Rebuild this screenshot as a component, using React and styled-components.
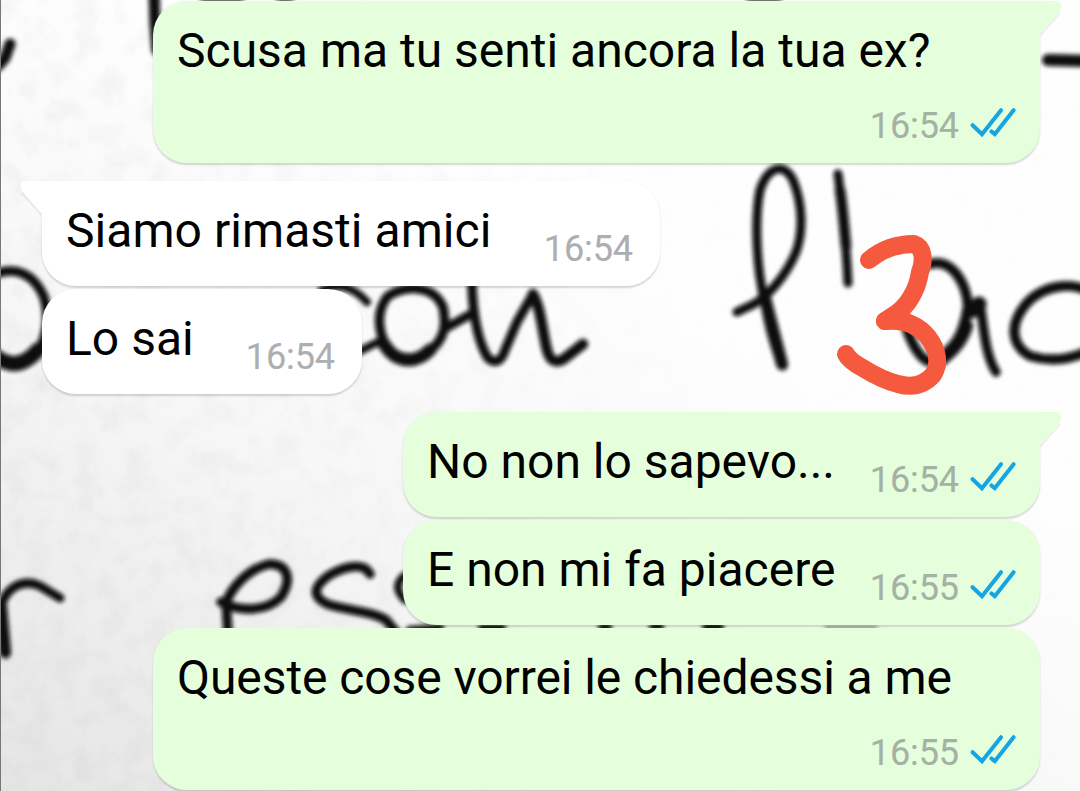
import styled, { createGlobalStyle, css } from "styled-components";

const GlobalStyle = createGlobalStyle`
  body {
    margin: 0;
    overflow: hidden;
    background: #f6f6f6;
  }
`;

const StyledChat = styled.main`
  position: relative;
  box-sizing: border-box;
  width: 1080px;
  height: 791px;
  overflow: hidden;
  font-family: Roboto, "Liberation Sans", sans-serif;
`;

const StyledWallpaper = styled.svg`
  position: absolute;
  inset: 0;
`;

const StyledMessages = styled.div`
  position: relative;
  display: flex;
  flex-direction: column;
  padding: 1px 40px 0 42px;
`;

const sentTail = css`
  right: -21px;
`;

const receivedTail = css`
  left: -21px;
  transform: scaleX(-1);
`;

const StyledBubble = styled.div`
  position: relative;
  display: flex;
  justify-content: space-between;
  box-sizing: border-box;
  flex-shrink: 0;
  width: ${(props) => props.$width}px;
  height: ${(props) => (props.$tall ? 162 : 105)}px;
  margin-bottom: ${(props) => (props.$last ? 18 : 3)}px;
  padding: 22px 24px 16px 24px;
  align-self: ${(props) => (props.$sent ? "flex-end" : "flex-start")};
  background: ${(props) => (props.$sent ? "#e5ffdc" : "#ffffff")};
  border-radius: 34px;
  ${(props) => props.$tail && (props.$sent ? "border-top-right-radius: 0;" : "border-top-left-radius: 0;")}
  box-shadow: 0 1.5px 2px rgba(0, 0, 0, 0.16);
`;

const StyledTail = styled.svg`
  position: absolute;
  top: 0;
  overflow: visible;
  ${(props) => (props.$sent ? sentTail : receivedTail)}
`;

const StyledText = styled.p`
  margin: 0;
  font-size: 48px;
  line-height: 56px;
  letter-spacing: ${(props) => props.$tracking || 0}px;
  white-space: nowrap;
  color: #000;
`;

/* on tall bubbles the time sits under the text, so it takes no width */
const StyledMeta = styled.div`
  display: flex;
  align-self: flex-end;
  justify-content: flex-end;
  width: ${(props) => (props.$tall ? 0 : "auto")};
  margin-right: ${(props) => (props.$sent ? 0 : 3)}px;
`;

const StyledTime = styled.span`
  font-size: 36px;
  line-height: 42px;
  letter-spacing: -0.1px;
  color: ${(props) => (props.$sent ? "#a5b1a5" : "#abafb2")};
  -webkit-text-stroke: 0.15px currentColor;
`;

const StyledTicks = styled.svg`
  flex-shrink: 0;
  margin: 0 0 0 11px;
`;

const Ticks = () => (
  <StyledTicks width="46" height="34" viewBox="970 105 46 34" fill="none" stroke="#14a5e2" strokeWidth="4" strokeLinecap="round">
    <path d="M972.6 125.2 982 134.2 1001 110.2" />
    <path d="M991.4 131.4 994.8 134.2 1013.6 110.2" />
  </StyledTicks>
);

const messages = [
  { text: "Scusa ma tu senti ancora la tua ex?", time: "16:54", width: 887, sent: true, tall: true, tail: true, last: true },
  { text: "Siamo rimasti amici", time: "16:54", width: 618, tail: true, tracking: 0.05 },
  { text: "Lo sai", time: "16:54", width: 320, last: true },
  { text: "No non lo sapevo...", time: "16:54", width: 637, sent: true, tail: true },
  { text: "E non mi fa piacere", time: "16:55", width: 637, sent: true },
  { text: "Queste cose vorrei le chiedessi a me", time: "16:55", width: 887, sent: true, tall: true, tracking: -0.08 },
];

const Message = ({ text, time, width, sent, tall, tail, last, tracking }) => (
  <StyledBubble $width={width} $sent={sent} $tall={tall} $tail={tail} $last={last}>
    {tail && (
      <StyledTail $sent={sent} width="22" height="34" viewBox="0 0 22 34">
        <path d="M1.5 34 21 12" stroke="#000" strokeOpacity="0.06" strokeWidth="2.4" />
        <path d="M0 0H17.5C22 0 23.5 5 20.5 10.5L1 33V34H0Z" fill={sent ? "#e5ffdc" : "#ffffff"} />
      </StyledTail>
    )}
    <StyledText $tracking={tracking}>{text}</StyledText>
    <StyledMeta $sent={sent} $tall={tall}>
      <StyledTime $sent={sent}>{time}</StyledTime>
      {sent && <Ticks />}
    </StyledMeta>
  </StyledBubble>
);

const Wallpaper = () => (
  <StyledWallpaper width="1080" height="791" viewBox="0 0 1080 791" fill="none">
    <defs>
      <linearGradient id="paper" gradientUnits="userSpaceOnUse" x1="420" y1="150" x2="60" y2="791">
        <stop offset="0" stopColor="#fefefe" />
        <stop offset="0.45" stopColor="#f7f7f7" />
        <stop offset="1" stopColor="#e6e6e6" />
      </linearGradient>
      <linearGradient id="fade" x1="0" y1="0" x2="1" y2="0">
        <stop offset="0" stopColor="#fff" />
        <stop offset="0.4" stopColor="#fff" stopOpacity="0.6" />
        <stop offset="0.65" stopColor="#fff" stopOpacity="0.1" />
      </linearGradient>
      <mask id="left">
        <rect width="1080" height="791" fill="url(#fade)" />
      </mask>
      <filter id="grain" x="0" y="0" width="100%" height="100%">
        <feTurbulence type="fractalNoise" baseFrequency="0.04" numOctaves="3" seed="4" />
        <feColorMatrix values="0 0 0 0 0.4  0 0 0 0 0.4  0 0 0 0 0.4  0.25 0 0 0 -0.105" />
      </filter>
      <filter id="ink" filterUnits="userSpaceOnUse" x="-20" y="-20" width="1120" height="830">
        <feGaussianBlur stdDeviation="2.1" />
      </filter>
    </defs>
    <rect width="1080" height="791" fill="url(#paper)" />
    <g mask="url(#left)">
      <rect width="1080" height="791" filter="url(#grain)" />
    </g>
    <g stroke="#080808" strokeWidth="9.5" strokeLinecap="round" strokeLinejoin="round" filter="url(#ink)">
      <path d="M-2 66 5 58 10 44" strokeWidth="11" />
      <path d="M154-8 155 24 157 50" strokeWidth="11" />
      <path d="M204-4H240M280-4H290M750-4H778" />
      <path d="M1048 60 1090 61" strokeWidth="12" />
      {/* first line */}
      <path d="M-5 274C16 266 34 274 44 297 52 324 44 352 26 362" />
      <path d="M-5 356C8 366 22 368 38 350" strokeWidth="15" />
      <path d="M322 290C340 282 354 288 367 302M358 352 380 341" strokeWidth="8" />
      <path d="M388 296C408 284 434 286 443 307 447 326 444 338 432 349 416 366 396 362 386 346 376 326 378 308 388 296" />
      <path d="M384 344C396 364 416 364 430 350" strokeWidth="13" />
      <path d="M446 328 471 314" strokeWidth="9" />
      <path d="M472 286C473 320 480 346 488 358 496 365 502 360 505 350L517 322 533 294" />
      <path d="M533 294C541 308 542 330 547 350 550 362 557 364 565 358L583 344" strokeWidth="10.5" />
      <path d="M783 366C773 346 768 322 764 298 757 270 754 220 760 190 768 166 784 162 793 180 802 202 804 230 796 252 786 276 768 296 754 304L737 312" strokeWidth="9" />
      <path d="M764 294 782 364" strokeWidth="12" />
      <path d="M838 174C842 204 846 240 848 283" strokeWidth="9" />
      <path d="M840 190C843 208 844 226 846 246" strokeWidth="10.5" />
      <path d="M930 264C950 258 966 280 968 306 962 344 946 360 930 362 916 358 906 330 904 318" strokeWidth="10" />
      <path d="M966 326C960 344 950 352 940 360" strokeWidth="14" />
      <path d="M968 312 980 302C984 332 986 356 996 372" strokeWidth="9.5" />
      <path d="M971 311 979 304" strokeWidth="15" />
      <path d="M1090 292C1072 282 1044 284 1026 304 1008 326 1012 346 1030 356 1050 362 1070 360 1090 350" strokeWidth="10" />
      {/* second line */}
      <path d="M6 654 1 606C6 588 22 578 40 586L60 598" strokeWidth="9" />
      <path d="M1 606 5 652" strokeWidth="12" />
      <path d="M221 602C240 612 266 612 281 597 293 578 287 564 269 564 246 570 232 588 226 602L228 634" />
      <path d="M370 574C364 562 344 566 328 576 312 588 312 598 330 605 352 611 374 612 386 620L396 632" />
      <path d="M404 576C395 584 397 592 405 600M410 630 440 628M482 628H502M602 627H608M653 627H660M706 627H720" strokeWidth="8" />
      <path d="M826 628H876" strokeWidth="4" stroke="#888" />
    </g>
    <path d="M0.5 0V791" stroke="#777" />
    <g stroke="#f55a3e" strokeWidth="18" strokeLinecap="round" strokeLinejoin="round">
      <path d="M869 260C882 249 898 244 914 244 923 247 925 259 920 272 917 292 906 308 894 315L885 321" />
      <path d="M885 321C904 319 918 325 928 337 938 350 940 364 933 375 924 385 912 388 898 384 880 380 866 370 856 364 850 360 848 358 846 354" />
    </g>
  </StyledWallpaper>
);

const App = () => {
  return (
    <>
      <GlobalStyle />
      <StyledChat>
        <Wallpaper />
        <StyledMessages>
          {messages.map((message) => (
            <Message key={message.text} {...message} />
          ))}
        </StyledMessages>
      </StyledChat>
    </>
  );
};

export default App;
